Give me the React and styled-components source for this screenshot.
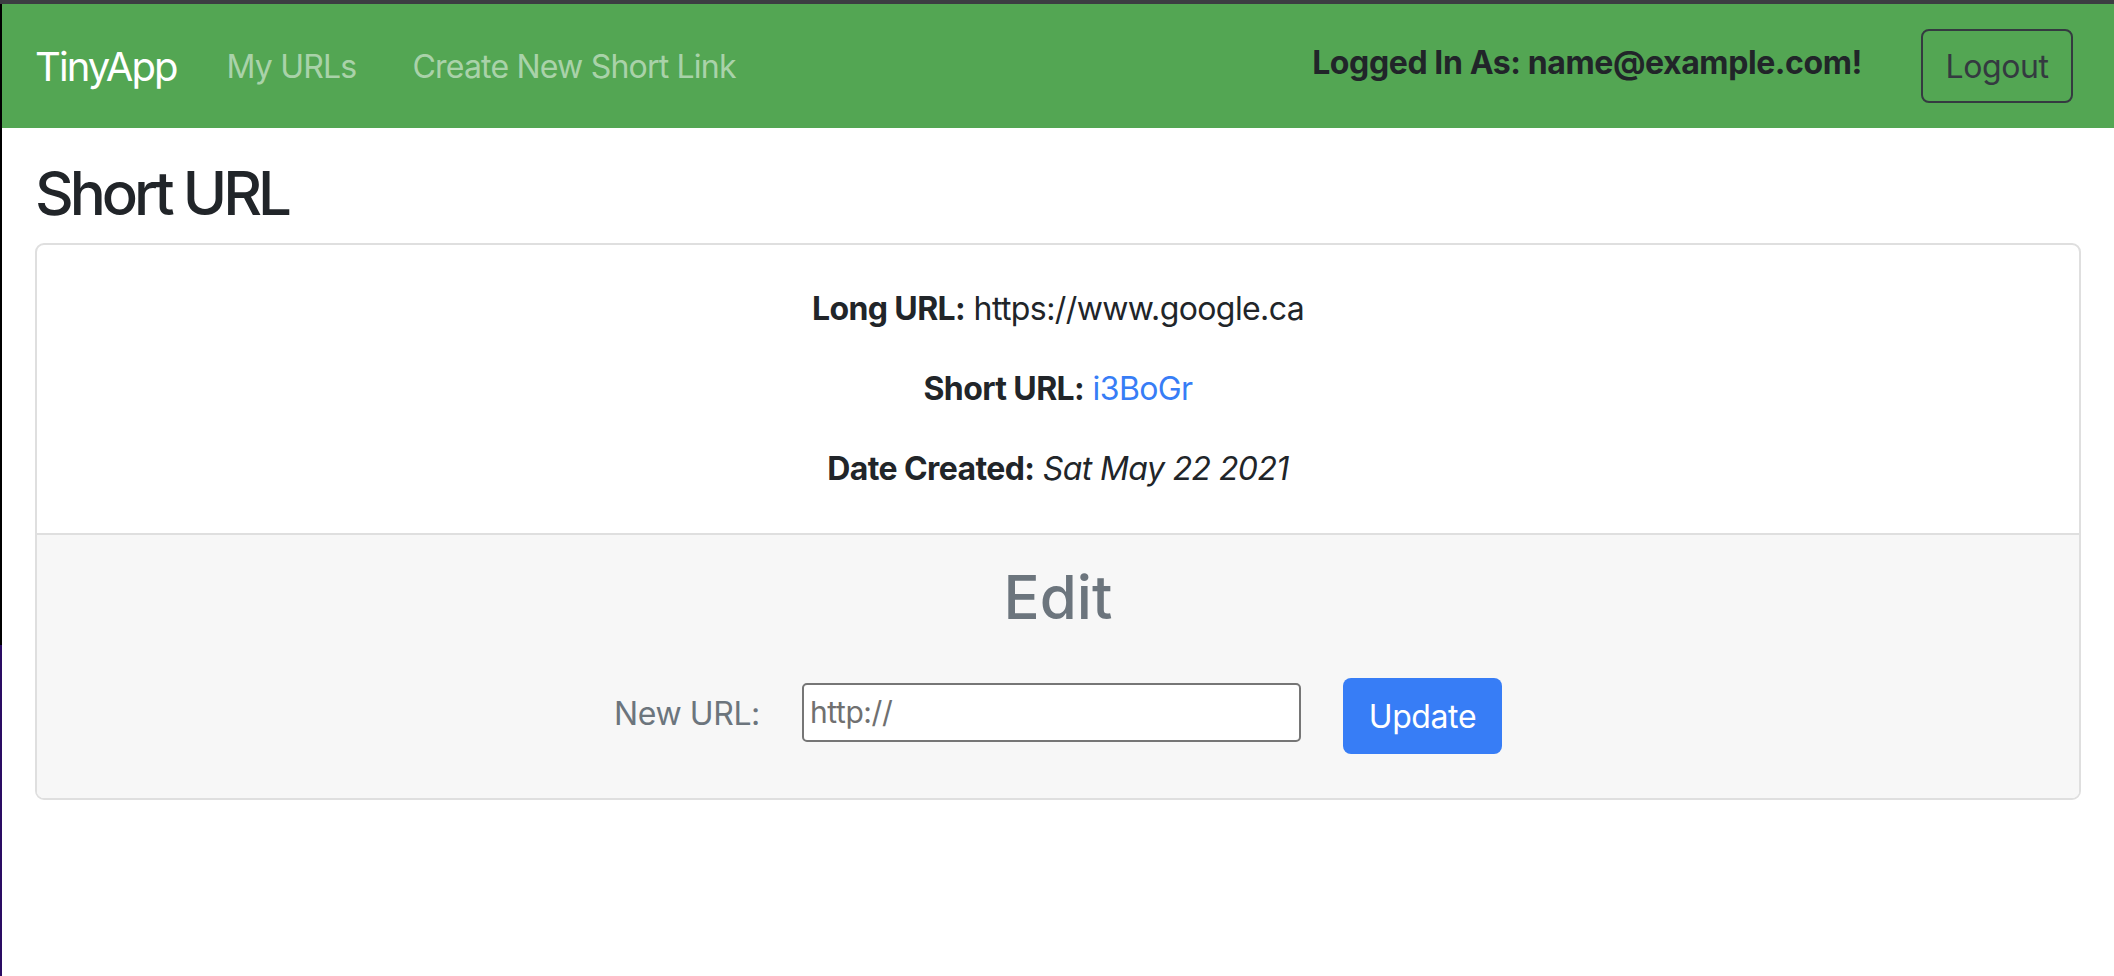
import styled, { createGlobalStyle } from 'styled-components';
import React from "react";

//------------------------------- ESTILOS -------------------------

const GlobalStyle = createGlobalStyle`
    html, body {
        margin: 0;
        padding: 0;
        background: #fff;
    }
    body {
        font-family: Inter, "Noto Sans", "Liberation Sans", sans-serif;
        color: #212529;
    }
`

const Frame = styled.div`
    min-height: 100vh;
    box-sizing: border-box;
    border-top: 4px solid #3c3d42;
    padding-left: 2px;
    background: linear-gradient(to bottom, #000 0, #000 641px, #2a0c63 641px) left top / 2px 100% no-repeat, #fff;
`

const NavBar = styled.nav`
    height: 124px;
    background-color: #53a653;
    display: flex;
    align-items: center;
    padding: 0 41px 0 33px;
`

const Brand = styled.a`
    font-size: 40px;
    color: #fff;
    margin-right: 50px;
    text-decoration: none;
    letter-spacing: -1.9px;
`

const NavLink = styled.a`
    font-size: 32px;
    color: rgba(255, 255, 255, 0.52);
    margin-right: 56px;
    text-decoration: none;
    letter-spacing: -0.8px;
`

const Spacer = styled.div`
    flex: 1;
`

const UserText = styled.span`
    font-size: 32px;
    font-weight: 700;
    color: #212529;
    margin-right: 59px;
    margin-bottom: 8px;
    letter-spacing: -0.4px;
`

const LogoutButton = styled.button`
    width: 152px;
    height: 74px;
    box-sizing: border-box;
    border: 2px solid #343a40;
    border-radius: 8px;
    background: transparent;
    color: #343a40;
    font-family: inherit;
    font-size: 32px;
    letter-spacing: -0.4px;
    padding: 0;
`

const Main = styled.main`
    padding: 0 33px;
`

const Title = styled.h1`
    font-size: 60px;
    font-weight: 500;
    line-height: 72px;
    margin: 29px 0 14px;
    letter-spacing: -4px;
`

const Card = styled.section`
    border: 2px solid #dfdfdf;
    border-radius: 9px;
    overflow: hidden;
`

const Info = styled.div`
    padding: 40px 20px;
    display: flex;
    flex-direction: column;
    align-items: center;
    gap: 32px;
`

const InfoLine = styled.p`
    margin: 0;
    font-size: 32px;
    line-height: 48px;
    letter-spacing: -0.6px;
    color: #212529;
`

const Label = styled.b`
    font-weight: 700;
`

const ShortLink = styled.a`
    color: #377df6;
    text-decoration: none;
`

const Footer = styled.div`
    border-top: 2px solid #dfdfdf;
    background: #f7f7f7;
    padding: 26px 20px 44px;
    display: flex;
    flex-direction: column;
    align-items: center;
`

const EditTitle = styled.h2`
    font-size: 60px;
    font-weight: 500;
    line-height: 72px;
    color: #6c757d;
    margin: 0 0 45px;
    letter-spacing: 0;
`

const FormRow = styled.form`
    display: flex;
    align-items: center;
    gap: 42px;
`

const FieldLabel = styled.label`
    font-size: 32px;
    color: #6c757d;
    letter-spacing: -0.4px;
    margin-top: -6px;
`

const UrlInput = styled.input`
    width: 499px;
    height: 59px;
    box-sizing: border-box;
    border: 2px solid #767676;
    border-radius: 5px;
    padding: 0 6px;
    font-family: inherit;
    font-size: 30px;
    letter-spacing: -0.4px;
    color: #212529;
    background: #fff;
    margin-top: -8px;

    &::placeholder {
        color: #707070;
    }
`

const UpdateButton = styled.button`
    width: 159px;
    height: 76px;
    border: none;
    border-radius: 8px;
    background: #377df6;
    color: #fff;
    font-family: inherit;
    font-size: 32px;
    letter-spacing: -0.4px;
    padding: 0;
`

//-------------------------------------------------------------------
export default function App() {

    const url = {
        longURL: "https://www.google.ca",
        shortURL: "i3BoGr",
        created: "Sat May 22 2021"
    }

    return (
        <Frame>
            <GlobalStyle />
            <NavBar>
                <Brand href="#">TinyApp</Brand>
                <NavLink href="#">My URLs</NavLink>
                <NavLink href="#">Create New Short Link</NavLink>
                <Spacer />
                <UserText>Logged In As: name@example.com!</UserText>
                <LogoutButton>Logout</LogoutButton>
            </NavBar>
            <Main>
                <Title>Short URL</Title>
                <Card>
                    <Info>
                        <InfoLine><Label>Long URL:</Label> {url.longURL}</InfoLine>
                        <InfoLine><Label>Short URL:</Label> <ShortLink href="#">{url.shortURL}</ShortLink></InfoLine>
                        <InfoLine><Label>Date Created:</Label> <i>{url.created}</i></InfoLine>
                    </Info>
                    <Footer>
                        <EditTitle>Edit</EditTitle>
                        <FormRow onSubmit={(e) => e.preventDefault()}>
                            <FieldLabel htmlFor="newURL">New URL:</FieldLabel>
                            <UrlInput id="newURL" type="text" placeholder="http://" />
                            <UpdateButton type="submit">Update</UpdateButton>
                        </FormRow>
                    </Footer>
                </Card>
            </Main>
        </Frame>
    )
}
